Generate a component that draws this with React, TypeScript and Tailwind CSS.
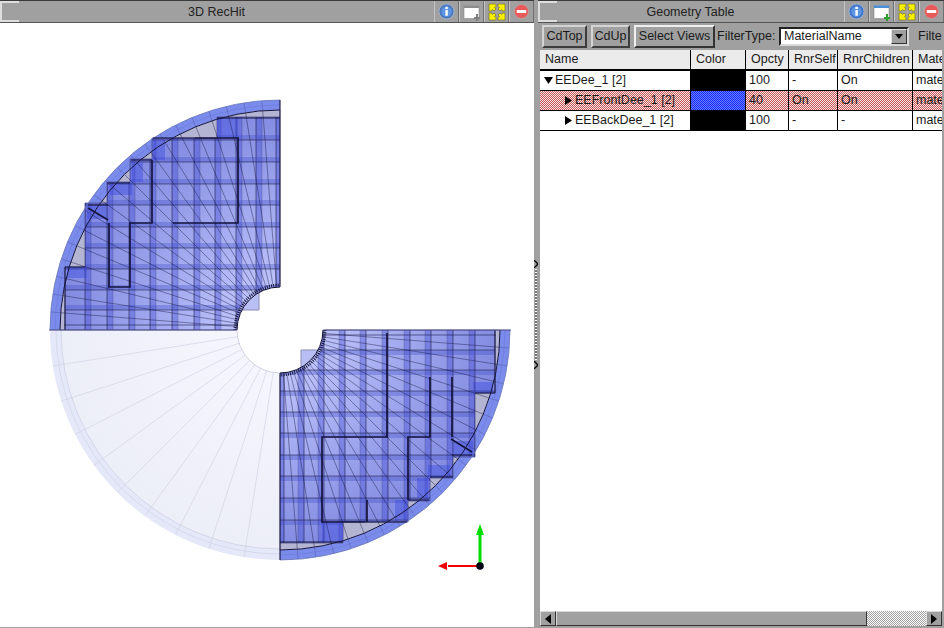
const sans = "font-['Liberation_Sans',Arial,sans-serif]";

const CX = 280;
const CY = 330;

function pt(r: number, deg: number) {
  const a = (deg * Math.PI) / 180;
  return `${(CX + r * Math.cos(a)).toFixed(2)} ${(CY + r * Math.sin(a)).toFixed(2)}`;
}

function sector(r1: number, r2: number, a1: number, a2: number) {
  const inner = r1 > 0 ? `L${pt(r1, a2)} A${r1} ${r1} 0 0 0 ${pt(r1, a1)}` : `L${CX} ${CY}`;
  return `M${pt(r2, a1)} A${r2} ${r2} 0 0 1 ${pt(r2, a2)} ${inner} Z`;
}

function arc(r: number, a1: number, a2: number) {
  return `M${pt(r, a1)} A${r} ${r} 0 0 1 ${pt(r, a2)}`;
}

const STAIRS =
  "65,330 65,267 85,267 85,203 107,203 107,182 130,182 130,159 152,159 152,138 217,138 217,117 280,117 280,330";
const STAIR_EDGE = "65,330 65,267 85,267 85,203 107,203 107,182 130,182 130,159 152,159 152,138 217,138 217,117 280,117";
const BAR_X = [85, 107, 129, 150, 172, 194, 215, 236, 256, 276];
const BAR_Y = [135, 157, 179, 200, 222, 243, 264, 285, 305];
const CORNERS = [
  [67, 267, 20, 11],
  [87, 205, 20, 14],
  [110, 183, 22, 12],
  [132, 162, 11, 20],
  [153, 140, 12, 20],
  [217, 118, 21, 20],
];
const SPOKES = Array.from({ length: 21 }, (_, i) => 180 + i * 4.5);
const PALE_SPOKES = [9, 18, 27, 36, 45, 54, 63, 72, 81].map((d) => 180 - d);

// heavy outlines differ between the two quadrants
const HEAVY_TOP =
  "M195 138H238V223H173M152 160V223H130V287H108M109 223V287M88 208L108 220";
const HEAVY_BOTTOM =
  "M195 138H238V223H173V327M193 138V160M152 160V223H130V283M108 223V283M109 221L88 208";

function Quadrant({ heavy }: { heavy: string }) {
  return (
    <g>
      <path d={sector(220, 230, 180, 270)} fill="#7b8bec" />
      <path d={sector(0, 220, 180, 270)} fill="#b3b5d3" />
      <polygon points={STAIRS} fill="url(#body)" />
      <polyline points={STAIR_EDGE} fill="none" stroke="#50508c" strokeWidth="0.8" />
      <g clipPath="url(#stairs)">
        {BAR_X.map((x) => (
          <g key={x}>
            <rect x={x} y="110" width="6" height="220" fill="#3c46d4" fillOpacity="0.36" />
            <line x1={x} y1="110" x2={x} y2="330" stroke="#14143c" strokeOpacity="0.7" strokeWidth="0.8" />
            <line x1={x + 6} y1="110" x2={x + 6} y2="330" stroke="#14143c" strokeOpacity="0.25" strokeWidth="0.8" />
          </g>
        ))}
        {BAR_Y.map((y) => (
          <g key={y}>
            <rect x="60" y={y} width="220" height="5" fill="#3c46c4" fillOpacity="0.32" />
            <line x1="60" y1={y + 5} x2="280" y2={y + 5} stroke="#14143c" strokeOpacity="0.65" strokeWidth="0.8" />
          </g>
        ))}
      </g>
      {CORNERS.map(([x, y, w, h]) => (
        <rect key={x} x={x} y={y} width={w} height={h} fill="#3a48e0" fillOpacity="0.42" />
      ))}
      <path d={sector(0, 43, 180, 270)} fill="#ffffff" />
      <path d="M259 293 L259 310 L238 310 A43 43 0 0 1 259 293 Z" fill="#b9bef4" />
      <path d="M259 293 L259 310 L238 310" fill="none" stroke="#8a8cb0" strokeWidth="1" />
      {SPOKES.map((d) => (
        <g key={d}>
          <path d={`M${pt(45, d)} L${pt(220, d)}`} stroke="#14143c" strokeOpacity="0.6" strokeWidth="0.7" />
          <path d={`M${pt(220, d)} L${pt(230, d)}`} stroke="#14143c" strokeOpacity="0.3" strokeWidth="0.7" />
        </g>
      ))}
      <path d={arc(230, 180, 270)} fill="none" stroke="#6a78b4" strokeWidth="0.8" />
      <path d={arc(225, 180, 270)} fill="none" stroke="#5a68c0" strokeOpacity="0.5" strokeWidth="0.6" />
      <path d={arc(220, 180, 270)} fill="none" stroke="#14143c" strokeWidth="1" />
      <path d={arc(45, 180, 270)} fill="none" stroke="#14143c" strokeWidth="3" strokeDasharray="1 1.2" />
      <path d={arc(43, 180, 270)} fill="none" stroke="#101030" strokeWidth="1" />
      <path d={heavy} fill="none" stroke="#14143c" strokeWidth="1.7" />
      <path
        d="M65 330V267H85M88 205H108M108 183H130M131 160H152M153 138H195M217 118H280"
        fill="none"
        stroke="#14143c"
        strokeWidth="1"
      />
      <path d="M64 325H237" stroke="#14143c" strokeWidth="0.8" strokeOpacity="0.7" />
      <line x1="49" y1="330" x2="237" y2="330" stroke="#50508c" strokeWidth="1" />
      <line x1="280" y1="100" x2="280" y2="287" stroke="#14143c" strokeWidth="1" />
    </g>
  );
}

function Scene() {
  return (
    <svg viewBox="0 23 534 604" className="block h-[604px] w-[534px]">
      <defs>
        <radialGradient id="body" gradientUnits="userSpaceOnUse" cx={CX} cy={CY} r="225">
          <stop offset="0.2" stopColor="#bcc2fa" />
          <stop offset="1" stopColor="#8089e0" />
        </radialGradient>
        <radialGradient id="pale" gradientUnits="userSpaceOnUse" cx={CX} cy={CY} r="219">
          <stop offset="0.2" stopColor="#f5f6fd" />
          <stop offset="1" stopColor="#eceef8" />
        </radialGradient>
        <clipPath id="stairs">
          <polygon points={STAIRS} />
        </clipPath>
      </defs>
      <path d={sector(43, 230, 90, 180)} fill="#e5e8f8" />
      <path d={sector(43, 219, 90, 180)} fill="url(#pale)" />
      {PALE_SPOKES.map((d) => (
        <path key={d} d={`M${pt(43, d)} L${pt(230, d)}`} stroke="#d2d4e4" strokeWidth="0.7" />
      ))}
      <path d={arc(224, 90, 180)} fill="none" stroke="#ccd0e6" strokeWidth="0.6" />
      <path d={arc(219, 90, 180)} fill="none" stroke="#c4c8de" strokeWidth="0.6" />
      <path d={arc(43, 90, 180)} fill="none" stroke="#c8c9da" strokeWidth="0.8" />
      <Quadrant heavy={HEAVY_TOP} />
      <g transform="rotate(180 280 330)">
        <Quadrant heavy={HEAVY_BOTTOM} />
      </g>
      <path d="M480 566V534" stroke="#00dd00" strokeWidth="3" />
      <polygon points="480,524 484,535 476,535" fill="#00dd00" />
      <path d="M480 566H448" stroke="#ee0000" strokeWidth="2" />
      <polygon points="438,566 447,562 447,570" fill="#ee0000" />
      <circle cx="480" cy="566" r="3.8" fill="#000014" />
    </svg>
  );
}

function InfoIcon({ muted }: { muted?: boolean }) {
  return (
    <svg viewBox="0 0 18 18" className="h-[17px] w-[17px]">
      <circle cx="9" cy="9" r="8" fill={muted ? "#4a78bc" : "#3f74c8"} stroke="#a4b4cc" />
      <circle cx="9" cy="9" r="5.5" fill="#5d95e4" />
      <rect x="7.8" y="7.5" width="2.6" height="6" fill="#ffffff" />
      <rect x="7.8" y="4" width="2.6" height="2.4" fill="#ffffff" />
    </svg>
  );
}

function WindowIcon({ bar, plus }: { bar: string; plus: string }) {
  return (
    <svg viewBox="0 0 18 18" className="h-[18px] w-[18px]">
      <rect x="1" y="2.5" width="15" height="13" fill="#ffffff" stroke="#888888" strokeWidth="0.6" />
      <rect x="1" y="2.5" width="15" height="2.5" fill={bar} />
      <path d="M11 14h2v-3h2v3h2v2h-2v2h-2v-2h-2z" fill={plus} />
    </svg>
  );
}

function ExpandIcon() {
  const corner = "1,1 8,1 8,3.5 6.5,4.5 8,6 6,8 4.5,6.5 3.5,8 1,8";
  return (
    <svg viewBox="0 0 18 18" className="h-[18px] w-[18px]">
      <g fill="#f8f000" stroke="#6a6a20" strokeWidth="0.6">
        <polygon points={corner} />
        <polygon points={corner} transform="rotate(90 9 9)" />
        <polygon points={corner} transform="rotate(180 9 9)" />
        <polygon points={corner} transform="rotate(270 9 9)" />
      </g>
    </svg>
  );
}

function CloseIcon() {
  return (
    <svg viewBox="0 0 18 18" className="h-[17px] w-[17px]">
      <circle cx="9" cy="9" r="7.5" fill="#e85a5a" stroke="#b8a0a0" />
      <rect x="4" y="7.5" width="10" height="3" fill="#ffffff" />
    </svg>
  );
}

function TitleButton({ children }: { children: React.ReactNode }) {
  return (
    <div className="flex h-full w-[25px] items-center justify-center border-x border-l-[#c4c4c4] border-r-[#707070]">
      {children}
    </div>
  );
}

function TitleBar({ title, active }: { title: string; active?: boolean }) {
  return (
    <div className="relative flex h-[23px] shrink-0 border-t border-b border-t-[#3a3a3a] border-b-[#555555]">
      <div className="absolute top-0 left-0 h-[2px] w-[19px] bg-[#dedede]" />
      <div className="absolute bottom-0 left-0 h-[2px] w-[19px] bg-[#dedede]" />
      <div className="flex flex-1 items-center justify-center border-l-2 border-l-[#dedede] pt-[1px] pr-[3px] text-[12.5px] text-[#222222]">
        {title}
      </div>
      <TitleButton>
        <InfoIcon muted={!active} />
      </TitleButton>
      <TitleButton>
        <WindowIcon bar={active ? "#4a90d8" : "#8c8c8c"} plus={active ? "#2ea02e" : "#808080"} />
      </TitleButton>
      <TitleButton>
        <ExpandIcon />
      </TitleButton>
      <TitleButton>
        <CloseIcon />
      </TitleButton>
    </div>
  );
}

function ToolButton({ label, width, open }: { label: string; width: string; open?: boolean }) {
  return (
    <button
      className={`${width} flex h-[23px] items-center justify-center border-2 text-[12.5px] text-[#1a1a1a] ${
        open
          ? "border-t-[#f0f0f0] border-l-[#f0f0f0] border-r-[#333333] border-b-[#333333]"
          : "border-t-[#d4d4d4] border-l-[#d4d4d4] border-r-[#3c3c3c] border-b-[#3c3c3c]"
      }`}
    >
      {label}
    </button>
  );
}

const COLUMNS = [
  { label: "Name", width: "w-[151px]" },
  { label: "Color", width: "w-[55px]" },
  { label: "Opcty", width: "w-[43px]" },
  { label: "RnrSelf", width: "w-[49px]" },
  { label: "RnrChildren", width: "w-[75px]" },
  { label: "Mate", width: "w-[29px]" },
];

interface RowData {
  name: string;
  indent: string;
  open?: boolean;
  selected?: boolean;
  swatch: string;
  opacity: string;
  self: string;
  children: string;
}

const ROWS: RowData[] = [
  { name: "EEDee_1 [2]", indent: "pl-[4px]", open: true, swatch: "bg-black", opacity: "100", self: "-", children: "On" },
  {
    name: "EEFrontDee_1 [2]",
    indent: "pl-[25px]",
    selected: true,
    swatch: "bg-[repeating-conic-gradient(#6f80ff_0_25%,#1028ff_0_50%)] bg-[length:2px_2px]",
    opacity: "40",
    self: "On",
    children: "On",
  },
  { name: "EEBackDee_1 [2]", indent: "pl-[25px]", swatch: "bg-black", opacity: "100", self: "-", children: "-" },
];

function Row({ row }: { row: RowData }) {
  const cell = "flex h-full items-center overflow-hidden whitespace-nowrap border-r border-black pl-[3px]";
  return (
    <div
      className={`flex h-[20px] border-b border-black text-[12.5px] text-[#1a1a1a] ${
        row.selected
          ? "bg-[repeating-conic-gradient(#ececec_0_25%,#cf5050_0_50%)] bg-[length:2px_2px]"
          : "bg-white"
      }`}
    >
      <div className={`${COLUMNS[0].width} ${row.indent} flex h-full items-center border-r border-black whitespace-nowrap`}>
        {row.open ? (
          <svg viewBox="0 0 9 7" className="mr-[2px] h-[7px] w-[9px]">
            <polygon points="0,0 9,0 4.5,7" fill="#000000" />
          </svg>
        ) : (
          <svg viewBox="0 0 7 9" className="mr-[3px] h-[9px] w-[7px]">
            <polygon points="0,0 7,4.5 0,9" fill="#000000" />
          </svg>
        )}
        <span>{row.name}</span>
      </div>
      <div className={`${COLUMNS[1].width} ${row.swatch} h-full border-r border-black`} />
      <div className={`${COLUMNS[2].width} ${cell}`}>{row.opacity}</div>
      <div className={`${COLUMNS[3].width} ${cell}`}>{row.self}</div>
      <div className={`${COLUMNS[4].width} ${cell}`}>{row.children}</div>
      <div className={`${COLUMNS[5].width} flex h-full items-center overflow-hidden pl-[3px]`}>mate</div>
    </div>
  );
}

function ScrollArrow({ dir }: { dir: "left" | "right" }) {
  return (
    <div className="flex h-full w-[16px] items-center justify-center border border-t-[#d8d8d8] border-l-[#d8d8d8] border-r-[#333333] border-b-[#333333] bg-[#a0a0a0]">
      <svg viewBox="0 0 6 10" className="h-[10px] w-[6px]">
        <polygon points={dir === "left" ? "6,0 0,5 6,10" : "0,0 6,5 0,10"} fill="#000000" />
      </svg>
    </div>
  );
}

function Scrollbar() {
  return (
    <div className="flex h-[15px] shrink-0 bg-[repeating-conic-gradient(#a0a0a0_0_25%,#ffffff_0_50%)] bg-[length:2px_2px]">
      <ScrollArrow dir="left" />
      <div className="h-full w-[311px] border border-t-[#d8d8d8] border-l-[#d8d8d8] border-r-[#333333] border-b-[#333333] bg-[#a0a0a0]" />
      <div className="flex-1" />
      <ScrollArrow dir="right" />
    </div>
  );
}

function Splitter() {
  return (
    <div className="flex w-[4px] shrink-0 flex-col items-center pt-[260px]">
      <svg viewBox="0 0 4 8" className="h-[8px] w-[4px]">
        <path d="M0 0L4 4L0 8" fill="none" stroke="#000000" strokeWidth="1.3" />
      </svg>
      <div className="my-[1px] h-[91px] w-[2px] bg-[repeating-linear-gradient(#ffffff_0_1px,#777777_1px_3px)]" />
      <svg viewBox="0 0 4 8" className="h-[8px] w-[4px]">
        <path d="M0 0L4 4L0 8" fill="none" stroke="#000000" strokeWidth="1.3" />
      </svg>
    </div>
  );
}

export default function App() {
  return (
    <div className={`${sans} flex h-[628px] w-[944px] overflow-hidden bg-[#a0a0a0]`}>
      <div className="flex w-[534px] shrink-0 flex-col">
        <TitleBar title="3D RecHit" />
        <div className="h-[604px] shrink-0 bg-white">
          <Scene />
        </div>
      </div>
      <Splitter />
      <div className="flex min-w-0 flex-1 flex-col">
        <TitleBar title="Geometry Table" active />
        <div className="flex h-[27px] shrink-0 items-center pl-[4px] text-[12.5px] text-[#1a1a1a]">
          <ToolButton label="CdTop" width="w-[45px]" />
          <div className="w-[4px]" />
          <ToolButton label="CdUp" width="w-[39px]" />
          <div className="w-[4px]" />
          <ToolButton label="Select Views" width="w-[81px]" open />
          <span className="ml-[2px] w-[62px] whitespace-nowrap">FilterType:</span>
          <div className="flex h-[19px] w-[130px] items-center border-2 border-t-[#222222] border-l-[#222222] border-r-[#d8d8d8] border-b-[#d8d8d8] bg-white pl-[3px]">
            <span className="flex-1">MaterialName</span>
            <div className="flex h-full w-[16px] items-center justify-center border border-t-[#e0e0e0] border-l-[#e0e0e0] border-r-[#333333] border-b-[#333333] bg-[#a0a0a0]">
              <svg viewBox="0 0 8 5" className="h-[5px] w-[8px]">
                <polygon points="0,0 8,0 4,5" fill="#000000" />
              </svg>
            </div>
          </div>
          <span className="ml-[9px] whitespace-nowrap">Filte</span>
        </div>
        <div className="mr-[2px] ml-[2px] flex min-h-0 flex-1 flex-col overflow-hidden bg-white">
          <div className="flex h-[21px] shrink-0 border-b-2 border-black bg-[#ebebeb] text-[12.5px] text-[#1a1a1a]">
            {COLUMNS.map((c) => (
              <div key={c.label} className={`${c.width} flex h-full items-center overflow-hidden border-r border-black pl-[5px] last:border-r-0`}>
                {c.label}
              </div>
            ))}
          </div>
          {ROWS.map((r) => (
            <Row key={r.name} row={r} />
          ))}
          <div className="flex-1" />
          <Scrollbar />
        </div>
        <div className="h-[2px] shrink-0" />
      </div>
    </div>
  );
}
